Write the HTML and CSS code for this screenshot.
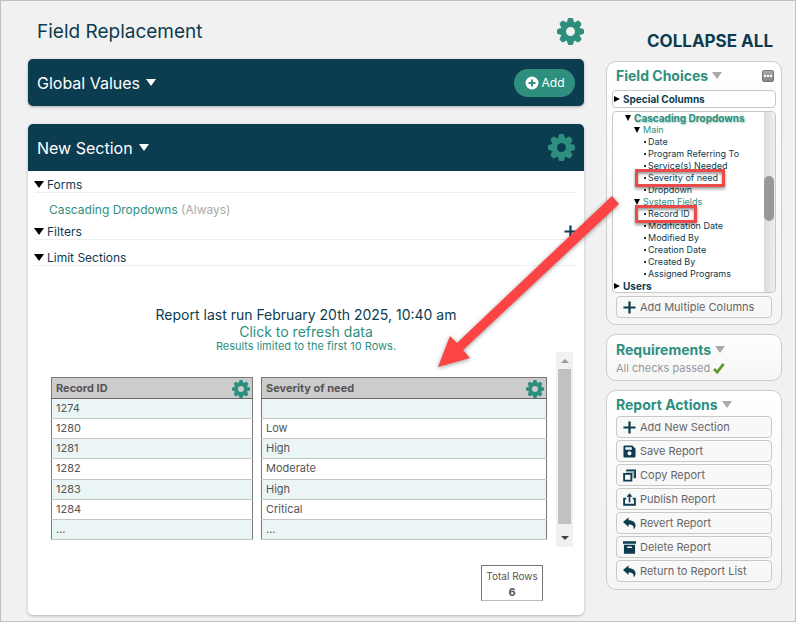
FILE: index.html
```html
<!DOCTYPE html>
<html lang="en">
<head>
  <meta charset="UTF-8">
  <meta name="viewport" content="width=device-width, initial-scale=1.0">
  <title>Field Replacement</title>
  <link rel="stylesheet" href="styles.css">
</head>
<body>
<svg class="defs" aria-hidden="true">
  <symbol id="gear" viewBox="-14 -14 28 28">
    <circle r="7.4" fill="none" stroke="currentColor" stroke-width="5.6"/>
    <g fill="currentColor">
      <path id="tooth" d="M-4-8.5 L-2.9-12.6 Q-2.6-14-1.5-14 H1.5 Q2.6-14 2.9-12.6 L4-8.5Z"/>
      <use href="#tooth" transform="rotate(45)"/>
      <use href="#tooth" transform="rotate(90)"/>
      <use href="#tooth" transform="rotate(135)"/>
      <use href="#tooth" transform="rotate(180)"/>
      <use href="#tooth" transform="rotate(225)"/>
      <use href="#tooth" transform="rotate(270)"/>
      <use href="#tooth" transform="rotate(315)"/>
    </g>
  </symbol>
  <symbol id="plus" viewBox="0 0 14 14">
    <path d="M7 .5V13.5M.5 7H13.500" stroke="currentColor" stroke-width="2.400" fill="none"/>
  </symbol>
  <symbol id="reply" viewBox="0 0 14 14">
    <path d="M0 5.5L6 0.5V3.5C11 3.5 13.5 6 13.5 9C13.5 11 12.8 12.2 11.5 13.5C12 10 10.500 8 6 8V10.800Z" fill="currentColor"/>
  </symbol>
</svg>
<div class="page">
  <main class="main">
    <header class="title-row">
      <h1>Field Replacement</h1>
      <button class="icon-button" aria-label="Report settings"><svg class="gear"><use href="#gear"/></svg></button>
    </header>

    <section class="bar">
      <button class="bar-title">Global Values <span class="down"></span></button>
      <button class="add-button">
        <svg viewBox="0 0 14 14"><circle cx="7" cy="7" r="6.500" fill="#fff"/><path d="M7 3.500V10.500M3.500 7H10.500" stroke="#2e8f7e" stroke-width="2"/></svg>
        Add
      </button>
    </section>

    <section class="card">
      <div class="bar bar-top">
        <button class="bar-title">New Section <span class="down"></span></button>
        <button class="icon-button" aria-label="Section settings"><svg class="gear"><use href="#gear"/></svg></button>
      </div>
      <div class="settings">
        <div class="setting"><button class="toggle"><span class="down"></span>Forms</button></div>
        <p class="form-name"><a href="#">Cascading Dropdowns</a> (Always)</p>
        <div class="setting">
          <button class="toggle"><span class="down"></span>Filters</button>
          <button class="icon-button" aria-label="Add filter"><svg class="small-icon"><use href="#plus"/></svg></button>
        </div>
        <div class="setting limit"><button class="toggle"><span class="down"></span>Limit Sections</button></div>
      </div>

      <div class="run-info">
        <p>Report last run February 20th 2025, 10:40 am</p>
        <a href="#">Click to refresh data</a>
        <small>Results limited to the first 10 Rows.</small>
      </div>

      <div class="results">
        <div class="columns">
          <table>
            <thead><tr><th><div>Record ID <button class="icon-button" aria-label="Record ID settings"><svg class="gear-small"><use href="#gear"/></svg></button></div></th></tr></thead>
            <tbody>
              <tr><td>1274</td></tr>
              <tr><td>1280</td></tr>
              <tr><td>1281</td></tr>
              <tr><td>1282</td></tr>
              <tr><td>1283</td></tr>
              <tr><td>1284</td></tr>
              <tr><td>...</td></tr>
            </tbody>
          </table>
          <table>
            <thead><tr><th><div>Severity of need <button class="icon-button" aria-label="Severity of need settings"><svg class="gear-small"><use href="#gear"/></svg></button></div></th></tr></thead>
            <tbody>
              <tr><td></td></tr>
              <tr><td>Low</td></tr>
              <tr><td>High</td></tr>
              <tr><td>Moderate</td></tr>
              <tr><td>High</td></tr>
              <tr><td>Critical</td></tr>
              <tr><td>...</td></tr>
            </tbody>
          </table>
        </div>
        <div class="scrollbar">
          <span class="scroll-up"></span>
          <span class="thumb"></span>
          <span class="scroll-down"></span>
        </div>
      </div>

      <div class="total"><span>Total Rows</span><strong>6</strong></div>
    </section>
  </main>

  <aside class="sidebar">
    <button class="collapse">COLLAPSE ALL</button>

    <section class="panel fields">
      <div class="panel-head">
        <h2>Field Choices <span class="down"></span></h2>
        <button class="more" aria-label="More options"><i></i><i></i><i></i></button>
      </div>
      <button class="special"><span class="right"></span>Special Columns</button>
      <div class="tree">
        <ul>
          <li class="form"><span class="down"></span>Cascading Dropdowns</li>
          <li class="group"><span class="down"></span>Main</li>
          <li class="field">Date</li>
          <li class="field">Program Referring To</li>
          <li class="field">Service(s) Needed</li>
          <li class="field"><span class="marked">Severity of need</span></li>
          <li class="field">Dropdown</li>
          <li class="group"><span class="down"></span>System Fields</li>
          <li class="field"><span class="marked">Record ID</span></li>
          <li class="field">Modification Date</li>
          <li class="field">Modified By</li>
          <li class="field">Creation Date</li>
          <li class="field">Created By</li>
          <li class="field">Assigned Programs</li>
          <li class="users"><span class="right"></span>Users</li>
        </ul>
        <div class="tree-scroll"><span></span></div>
      </div>
      <button class="action"><svg><use href="#plus"/></svg>Add Multiple Columns</button>
    </section>

    <section class="panel">
      <h2>Requirements <span class="down"></span></h2>
      <p class="checks">All checks passed
        <svg viewBox="0 0 13 12"><path d="M1 6.500L4.500 10L11.500 1" fill="none" stroke="#5c9a32" stroke-width="3"/></svg>
      </p>
    </section>

    <section class="panel actions">
      <h2>Report Actions <span class="down"></span></h2>
      <button class="action"><svg><use href="#plus"/></svg>Add New Section</button>
      <button class="action"><svg viewBox="0 0 14 14"><path fill="currentColor" fill-rule="evenodd" d="M2 .5H10L13.500 4V12Q13.500 13.500 12 13.500H2Q.5 13.500 .5 12V2Q.5.5 2 .5ZM2.500 2.500V5H9.500V2.500ZM7 6.800A2.200 2.200 0 1 0 7 11.200A2.200 2.200 0 1 0 7 6.800Z"/></svg>Save Report</button>
      <button class="action"><svg viewBox="0 0 14 14"><path d="M1.200 5.200H9V12.500H1.200ZM3.500 1.500H13V10" fill="none" stroke="currentColor" stroke-width="2"/><path d="M3.500 3.300H11V10" fill="none" stroke="currentColor" stroke-width=".6"/></svg>Copy Report</button>
      <button class="action"><svg viewBox="0 0 14 14"><path d="M3.500 6H1.200V12.700H12.800V6H10.500" fill="none" stroke="currentColor" stroke-width="2"/><path d="M7 10V2" stroke="currentColor" stroke-width="1.800"/><path d="M3.800 4L7 .3L10.200 4Z" fill="currentColor"/></svg>Publish Report</button>
      <button class="action"><svg><use href="#reply"/></svg>Revert Report</button>
      <button class="action"><svg viewBox="0 0 14 14"><path fill="currentColor" fill-rule="evenodd" d="M0 .3H14V3H0ZM1 4H13V13.700H1ZM4.500 6V7.500H9.500V6Z"/></svg>Delete Report</button>
      <button class="action"><svg><use href="#reply"/></svg>Return to Report List</button>
    </section>
  </aside>

  <!-- pointer from the field list to its column -->
  <svg class="arrow" viewBox="0 0 190 180" aria-hidden="true">
    <path d="M179 4L186 12L30 158L37 166L5 175L17 144L24 151Z" fill="#fd4444"/>
  </svg>
</div>
</body>
</html>
```
FILE: styles.css
```css
* {
  box-sizing: border-box;
}
body {
  margin: 0;
  background: #f1f1f1;
  color: #0c3c50;
  font-family: Inter, "Liberation Sans", sans-serif;
  font-size: 12px;
}
h1, h2, p, ul {
  margin: 0;
  padding: 0;
  font-weight: normal;
}
button {
  padding: 0;
  border: none;
  background: none;
  color: inherit;
  font: inherit;
  text-align: left;
  cursor: pointer;
}
a {
  color: #2e8f7e;
  text-decoration: none;
}
.defs {
  position: absolute;
  width: 0;
  height: 0;
}
.page {
  position: relative;
  display: flex;
  align-items: flex-start;
  gap: 22px;
  min-height: 100vh;
  padding: 0 13px 6px 27px;
  border: 1px solid #c0c0c0;
}
.main {
  flex: 1;
  min-width: 0;
}
.title-row {
  display: flex;
  align-items: center;
  justify-content: space-between;
  height: 58px;
  padding: 2px 0 0 9px;
}
h1 {
  font-size: 19px;
}
.icon-button {
  display: flex;
  color: #2e8f7e;
}
.gear {
  width: 27px;
  height: 27px;
}
.gear-small {
  width: 18px;
  height: 18px;
}
.down {
  flex: none;
  display: inline-block;
  border: 5px solid transparent;
  border-top: 7px solid currentColor;
  border-bottom: 0;
}
.right {
  flex: none;
  display: inline-block;
  border: 3px solid transparent;
  border-left: 6px solid #000;
  border-right: 0;
}

/* section bars */
.bar {
  display: flex;
  align-items: center;
  justify-content: space-between;
  height: 47px;
  padding: 0 9px;
  border-radius: 5px;
  background: #0c3c50;
  color: #fff;
  box-shadow: 0 1px 3px rgba(0, 0, 0, 0.3);
}
.bar-top {
  border-radius: 5px 5px 0 0;
  box-shadow: none;
}
.bar-title {
  display: flex;
  align-items: center;
  gap: 6px;
  font-size: 16px;
}
.add-button {
  display: flex;
  align-items: center;
  justify-content: center;
  gap: 3px;
  width: 61px;
  height: 28px;
  border-radius: 14px;
  background: #2e8f7e;
}
.add-button svg {
  width: 14px;
  height: 14px;
}
.card {
  margin-top: 18px;
  padding-bottom: 14px;
  border-radius: 5px;
  background: #fff;
  box-shadow: 0 1px 3px rgba(0, 0, 0, 0.25);
}
.settings {
  padding: 6px 7px 0 6px;
}
.setting {
  display: flex;
  align-items: center;
  justify-content: space-between;
  height: 16px;
  border-bottom: 1px solid #eee;
}
.toggle {
  display: flex;
  align-items: center;
  gap: 3px;
}
.toggle .down {
  border-top-color: #000;
}
.setting .icon-button {
  color: #0c3c50;
}
.small-icon {
  width: 13px;
  height: 13px;
}
.form-name {
  height: 31px;
  padding-left: 15px;
  color: #aaa;
  line-height: 33px;
}
.limit {
  margin-top: 10px;
}
.run-info {
  display: flex;
  flex-direction: column;
  align-items: center;
  margin-top: 40px;
  font-size: 14px;
  line-height: 17px;
}
.run-info small {
  color: #2e8f7e;
  font-size: 11px;
  line-height: 12px;
}

/* result columns */
.results {
  display: flex;
  justify-content: space-between;
  gap: 9px;
  height: 195px;
  padding: 0 11px 0 23px;
}
.columns {
  flex: 1;
  display: flex;
  align-items: flex-start;
  gap: 8px;
  padding-top: 25px;
}
table {
  width: 202px;
  height: 163px;
  border: 1px solid #777;
  border-bottom-color: #bbb;
  border-collapse: collapse;
  color: #555;
  font-size: 11px;
  line-height: 13px;
}
table + table {
  flex: 1;
}
th {
  height: 21px;
  padding: 1px 2px 0 4px;
  border-bottom: 1px solid #666;
  background: #ccc;
}
th div {
  display: flex;
  align-items: center;
  justify-content: space-between;
}
td {
  height: 20px;
  padding: 0 4px;
  border-bottom: 1px solid #c4c4c4;
}
tbody tr:nth-child(odd) {
  background: #ecf5f6;
}
.scrollbar {
  display: flex;
  flex-direction: column;
  align-items: center;
  width: 17px;
  padding: 7px 2px;
  background: #f1f1f1;
}
.scroll-up,
.scroll-down {
  border: 4px solid transparent;
}
.scroll-up {
  border-top: 0;
  border-bottom-color: #999;
}
.scroll-down {
  border-bottom: 0;
  border-top-color: #444;
}
.thumb {
  flex: 1;
  width: 13px;
  margin: 6px 0 12px;
  background: #c1c1c1;
}
.total {
  display: flex;
  flex-direction: column;
  align-items: center;
  justify-content: space-between;
  width: 62px;
  height: 36px;
  margin: 18px 41px 0 auto;
  padding: 4px 0 1px;
  border: 1px solid #777;
  border-bottom-color: #bbb;
  color: #555;
  font-size: 10px;
  line-height: 13px;
}
.total strong {
  font-size: 11px;
}

/* sidebar */
.sidebar {
  flex: none;
  width: 176px;
  padding-top: 30px;
}
.collapse {
  display: block;
  margin: 0 9px 0 auto;
  font-size: 17px;
  font-weight: bold;
  line-height: 20px;
}
.panel {
  margin-top: 9px;
  padding: 5px 9px 3px;
  border: 1px solid #cfccc8;
  border-radius: 10px;
  background: linear-gradient(#fff, #f5f5f5);
}
.fields {
  margin-top: 10px;
  padding: 4px 5px 6px;
}
.panel-head {
  display: flex;
  align-items: center;
  justify-content: space-between;
  margin-bottom: 5px;
  padding: 0 2px 0 4px;
}
h2 {
  display: flex;
  align-items: center;
  gap: 4px;
  color: #2e8f7e;
  font-size: 14px;
  font-weight: bold;
  line-height: 19px;
}
h2 .down {
  border-top-color: #aaa;
}
.more {
  display: flex;
  align-items: center;
  justify-content: center;
  gap: 1px;
  width: 12px;
  height: 12px;
  border: 1px solid #777;
  border-radius: 2px;
  background: linear-gradient(#aaa, #888);
}
.more i {
  width: 2px;
  height: 2px;
  background: #fff;
}
.special {
  display: flex;
  align-items: center;
  gap: 3px;
  width: 100%;
  height: 18px;
  padding-left: 1px;
  border: 1px solid #c8c8c8;
  border-radius: 4px;
  background: #fff;
  font-size: 10px;
  font-weight: bold;
}
.tree {
  display: flex;
  justify-content: space-between;
  height: 182px;
  margin: 3px 0;
  border: 1px solid #c8c8c8;
  border-radius: 4px;
  background: #fff;
}
ul {
  list-style: none;
  font-size: 9px;
  line-height: 12px;
  white-space: nowrap;
}
li {
  display: flex;
  align-items: center;
  gap: 3px;
  height: 12px;
}
.form,
.users {
  font-size: 10px;
  font-weight: bold;
}
.form {
  padding-left: 12px;
  color: #2e8f7e;
  text-shadow: 1px 1px 2px #9cc9be;
}
.group {
  padding-left: 21px;
  color: #2e8f7e;
}
.users {
  padding-left: 1px;
}
li .down {
  border-width: 6px 3px 0;
  border-top-color: #000;
}
.field {
  gap: 2px;
  padding-left: 31px;
}
.field::before {
  content: "";
  width: 2px;
  height: 2px;
  background: #0c3c50;
}
.marked {
  position: relative;
}
.marked::after {
  content: "";
  position: absolute;
  inset: -3px -7px -3px -13px;
  border: 3px solid #e94b4b;
  box-shadow: 0 2px 3px rgba(0, 0, 0, 0.4), inset 0 2px 3px rgba(0, 0, 0, 0.4);
}
.tree-scroll {
  width: 11px;
  padding-top: 64px;
  border-radius: 0 4px 4px 0;
  background: linear-gradient(90deg, #dcdcdc, #eee);
}
.tree-scroll span {
  display: block;
  width: 10px;
  height: 45px;
  border-radius: 5px;
  background: #999;
}
.action {
  display: flex;
  align-items: center;
  gap: 4px;
  width: 100%;
  height: 22px;
  padding-left: 6px;
  border: 1px solid #c8c8c8;
  border-radius: 4px;
  background: #f8f8f8;
  color: #666;
  font-size: 11px;
}
.action svg {
  width: 13px;
  height: 13px;
  color: #0c3c50;
}
.fields .action {
  width: auto;
  min-width: 156px;
  margin: 0 4px;
}
.checks {
  display: flex;
  align-items: center;
  gap: 3px;
  color: #999;
  font-size: 11px;
  line-height: 18px;
}
.checks svg {
  width: 12px;
  height: 11px;
}
.actions {
  display: flex;
  flex-direction: column;
  gap: 2px;
  padding: 4px 9px 7px;
}
.arrow {
  position: absolute;
  top: 191px;
  left: 432px;
  width: 190px;
  height: 180px;
  filter: drop-shadow(0 1px 2px rgba(0, 0, 0, 0.4));
  pointer-events: none;
}
```
